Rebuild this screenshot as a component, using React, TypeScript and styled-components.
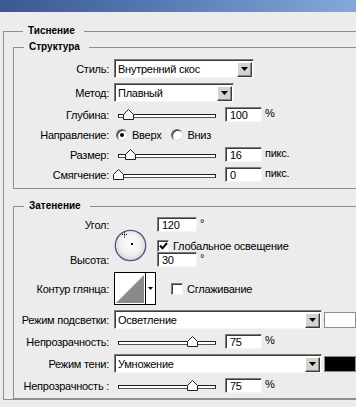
import React from "react";
import styled, { createGlobalStyle } from "styled-components";

const Global = createGlobalStyle`
  html, body { margin: 0; padding: 0; overflow: hidden; background: #ececec; }
  body { font-family: "Liberation Sans", Arial, sans-serif; font-size: 11px; color: #000; letter-spacing: -0.25px; }
  #root { width: 356px; height: 407px; overflow: hidden; }
`;

const Window = styled.div`
  width: 356px;
  height: 407px;
  overflow: hidden;
  background: #ececec;
`;

const TitleBar = styled.div`
  height: 12px;
  background: linear-gradient(90deg, #3a5893 0%, #5879b5 45%, #86a8d9 100%);
`;

const OuterGroup = styled.fieldset`
  margin: 13px -60px 0 3px;
  padding: 4px 0 0 9px;
  border: 1px solid #8e8e8e;
  min-width: 0;
`;

const SubGroup = styled.fieldset`
  margin: 0 -40px 0 0;
  padding: 6px 0 6px 0;
  border: 1px solid #8e8e8e;
  min-width: 0;
  & + & {
    margin-top: 11px;
    padding-top: 5px;
    padding-bottom: 5px;
  }
`;

const Legend = styled.legend`
  margin-left: 10px;
  padding: 0 9px 0 5px;
  font-size: 10px;
  font-weight: bold;
  line-height: 12px;
  letter-spacing: 0;
`;

const Rows = styled.div`
  display: flex;
  flex-direction: column;
  gap: 5px;
`;

const Row = styled.div<{ $h: number }>`
  display: flex;
  align-items: center;
  height: ${(p) => p.$h}px;
`;

const Label = styled.span`
  flex: none;
  width: 95px;
  margin-right: 5px;
  text-align: right;
  white-space: nowrap;
`;

const Sunken = `
  box-sizing: border-box;
  background: #fff;
  border-style: solid;
  border-width: 1px;
  border-color: #7c7c7c #f4f4f4 #f4f4f4 #7c7c7c;
  box-shadow: inset 1px 1px 0 #3c3c3c;
`;

const Select = styled.div<{ $w: number }>`
  ${Sunken}
  width: ${(p) => p.$w}px;
  height: 19px;
  display: flex;
  align-items: center;
  padding: 1px 1px 0 3px;
`;

const SelectText = styled.span`
  flex: 1;
  white-space: nowrap;
  overflow: hidden;
`;

const DropButton = styled.span`
  flex: none;
  box-sizing: border-box;
  width: 15px;
  height: 15px;
  background: #d6d3ce;
  border: 1px solid;
  border-color: #ffffff #3c3c3c #3c3c3c #ffffff;
  box-shadow: inset -1px -1px 0 #8a8a8a;
  display: flex;
  align-items: center;
  justify-content: center;
`;

const DownArrow = () => (
  <svg width="7" height="4" viewBox="0 0 7 4">
    <polygon points="0,0 7,0 3.5,4" fill="#000" />
  </svg>
);

const NumberField = styled.div<{ $w?: number }>`
  ${Sunken}
  flex: none;
  width: ${(p) => p.$w ?? 37}px;
  height: 15px;
  padding: 0 0 0 4px;
  line-height: 14px;
`;

const Unit = styled.span`
  margin-left: 3px;
  align-self: flex-start;
  line-height: 12px;
`;

const SliderBox = styled.div`
  position: relative;
  flex: none;
  width: 106px;
  height: 15px;
  box-sizing: border-box;
  padding: 3px 4px 0;
  margin-right: 5px;
  display: flex;
  align-items: center;
`;

const Track = styled.div`
  flex: 1;
  height: 2px;
  background: #fff;
  border: 1px solid #1e1e1e;
  border-bottom-color: #555;
`;

const ThumbWrap = styled.span`
  position: absolute;
  top: 2px;
  width: 11px;
  height: 11px;
  line-height: 0;
`;

const Slider: React.FC<{ f: number }> = ({ f }) => (
  <SliderBox>
    <Track />
    <ThumbWrap style={{ left: `${4 + f * 98 - 5.5}px` }}>
      <svg width="11" height="11" viewBox="0 0 11 11">
        <polygon
          points="5.5,0.5 10.5,5.5 10.5,10.5 0.5,10.5 0.5,5.5"
          fill="#fbfbfb"
          stroke="#222"
          strokeWidth="1"
        />
      </svg>
    </ThumbWrap>
  </SliderBox>
);

const RadioOption = styled.label<{ $ml: number }>`
  display: flex;
  align-items: center;
  gap: 4px;
  margin-left: ${(p) => p.$ml}px;
`;

const RadioDot = styled.span<{ $on?: boolean }>`
  position: relative;
  box-sizing: border-box;
  width: 12px;
  height: 12px;
  border-radius: 50%;
  background: #fff;
  border: 1px solid;
  border-color: #6a6a6a #dcdcdc #dcdcdc #6a6a6a;
  box-shadow: inset 1px 1px 0 #3a3a3a;
  &::after {
    content: "";
    display: ${(p) => (p.$on ? "block" : "none")};
    position: absolute;
    left: 3px;
    top: 3px;
    width: 4px;
    height: 4px;
    border-radius: 50%;
    background: #000;
  }
`;

const CheckOption = styled.label<{ $ml: number }>`
  display: flex;
  align-items: center;
  gap: 4px;
  margin-left: ${(p) => p.$ml}px;
  white-space: nowrap;
`;

const CheckBox = styled.span`
  ${Sunken}
  width: 12px;
  height: 12px;
  display: flex;
  align-items: center;
  justify-content: center;
  line-height: 0;
`;

const Tick = () => (
  <svg width="9" height="8" viewBox="0 0 9 8">
    <polyline points="1,3.5 3.5,6.3 8,1" fill="none" stroke="#000" strokeWidth="2" />
  </svg>
);

const AngleBlock = styled.div`
  display: grid;
  grid-template-columns: 100px 43px 1fr;
  grid-template-rows: 15px 20px 15px;
  height: 50px;
`;

const GridLabel = styled.span<{ $row: number }>`
  grid-column: 1;
  grid-row: ${(p) => p.$row};
  align-self: center;
  text-align: right;
  padding-right: 5px;
  white-space: nowrap;
`;

const DialCell = styled.div`
  grid-column: 2;
  grid-row: 1 / span 3;
  align-self: end;
  margin-bottom: 5px;
  line-height: 0;
`;

const GridCell = styled.div<{ $row: number }>`
  grid-column: 3;
  grid-row: ${(p) => p.$row};
  display: flex;
  align-items: ${(p) => (p.$row === 2 ? "flex-end" : "center")};
`;

const Dial = () => (
  <svg width="33" height="33" viewBox="0 0 33 33">
    <defs>
      <radialGradient id="dialFill" cx="50%" cy="45%" r="55%">
        <stop offset="0%" stopColor="#fdfdfd" />
        <stop offset="60%" stopColor="#f1f1f1" />
        <stop offset="88%" stopColor="#dedede" />
        <stop offset="100%" stopColor="#c4c6cc" />
      </radialGradient>
    </defs>
    <circle cx="16.5" cy="16.5" r="15.2" fill="url(#dialFill)" stroke="#4b5886" strokeWidth="1.3" />
    <rect x="17" y="14" width="2" height="2" fill="#000" />
    <line x1="8" y1="5.5" x2="14" y2="5.5" stroke="#000" strokeWidth="1" strokeDasharray="1 1" />
    <line x1="10.5" y1="2.5" x2="10.5" y2="9" stroke="#000" strokeWidth="1" strokeDasharray="1 1" />
  </svg>
);

const ContourPicker = styled.div`
  flex: none;
  display: flex;
  height: 33px;
  box-sizing: border-box;
  border: 1px solid #000;
  background: #fff;
`;

const ContourArrow = styled.span`
  width: 9px;
  border-left: 1px solid #000;
  display: flex;
  align-items: center;
  justify-content: center;
`;

const Swatch = styled.span<{ $c: string }>`
  flex: none;
  box-sizing: border-box;
  width: 32px;
  height: 16px;
  margin-left: 2px;
  background: ${(p) => p.$c};
  border: 1px solid #8c8c8c;
`;

const RadioText = styled.span``;

export default function App() {
  return (
    <Window>
      <Global />
      <TitleBar />
      <OuterGroup>
        <Legend>Тиснение</Legend>
        <SubGroup>
          <Legend>Структура</Legend>
          <Rows>
            <Row $h={19}>
              <Label>Стиль:</Label>
              <Select $w={140}>
                <SelectText>Внутренний скос</SelectText>
                <DropButton>
                  <DownArrow />
                </DropButton>
              </Select>
            </Row>
            <Row $h={19}>
              <Label>Метод:</Label>
              <Select $w={120}>
                <SelectText>Плавный</SelectText>
                <DropButton>
                  <DownArrow />
                </DropButton>
              </Select>
            </Row>
            <Row $h={15}>
              <Label>Глубина:</Label>
              <Slider f={0.11} />
              <NumberField>100</NumberField>
              <Unit>%</Unit>
            </Row>
            <Row $h={15}>
              <Label>Направление:</Label>
              <RadioOption $ml={2}>
                <RadioDot $on />
                <RadioText>Вверх</RadioText>
              </RadioOption>
              <RadioOption $ml={10}>
                <RadioDot />
                <RadioText>Вниз</RadioText>
              </RadioOption>
            </Row>
            <Row $h={15}>
              <Label>Размер:</Label>
              <Slider f={0.13} />
              <NumberField>16</NumberField>
              <Unit>пикс.</Unit>
            </Row>
            <Row $h={15}>
              <Label>Смягчение:</Label>
              <Slider f={0.01} />
              <NumberField>0</NumberField>
              <Unit>пикс.</Unit>
            </Row>
          </Rows>
        </SubGroup>
        <SubGroup>
          <Legend>Затенение</Legend>
          <Rows>
            <AngleBlock>
              <GridLabel $row={1}>Угол:</GridLabel>
              <GridLabel $row={3}>Высота:</GridLabel>
              <DialCell>
                <Dial />
              </DialCell>
              <GridCell $row={1}>
                <NumberField $w={40}>120</NumberField>
                <Unit>°</Unit>
              </GridCell>
              <GridCell $row={2}>
                <CheckOption $ml={0}>
                  <CheckBox>
                    <Tick />
                  </CheckBox>
                  <span>Глобальное освещение</span>
                </CheckOption>
              </GridCell>
              <GridCell $row={3}>
                <NumberField $w={40}>30</NumberField>
                <Unit>°</Unit>
              </GridCell>
            </AngleBlock>
            <Row $h={33}>
              <Label>Контур глянца:</Label>
              <ContourPicker>
                <svg width="30" height="31" viewBox="0 0 30 31">
                  <rect x="0" y="0" width="30" height="31" fill="#fff" />
                  <polygon points="1,30 29,2 29,30" fill="#8a8a8a" />
                </svg>
                <ContourArrow>
                  <svg width="5" height="3" viewBox="0 0 5 3">
                    <polygon points="0,0 5,0 2.5,3" fill="#000" />
                  </svg>
                </ContourArrow>
              </ContourPicker>
              <CheckOption $ml={15}>
                <CheckBox />
                <span>Сглаживание</span>
              </CheckOption>
            </Row>
            <Row $h={19}>
              <Label>Режим подсветки:</Label>
              <Select $w={208}>
                <SelectText>Осветление</SelectText>
                <DropButton>
                  <DownArrow />
                </DropButton>
              </Select>
              <Swatch $c="#ffffff" />
            </Row>
            <Row $h={15}>
              <Label>Непрозрачность:</Label>
              <Slider f={0.765} />
              <NumberField>75</NumberField>
              <Unit>%</Unit>
            </Row>
            <Row $h={19}>
              <Label>Режим тени:</Label>
              <Select $w={208}>
                <SelectText>Умножение</SelectText>
                <DropButton>
                  <DownArrow />
                </DropButton>
              </Select>
              <Swatch $c="#000000" />
            </Row>
            <Row $h={15}>
              <Label>Непрозрачность :</Label>
              <Slider f={0.765} />
              <NumberField>75</NumberField>
              <Unit>%</Unit>
            </Row>
          </Rows>
        </SubGroup>
      </OuterGroup>
    </Window>
  );
}
